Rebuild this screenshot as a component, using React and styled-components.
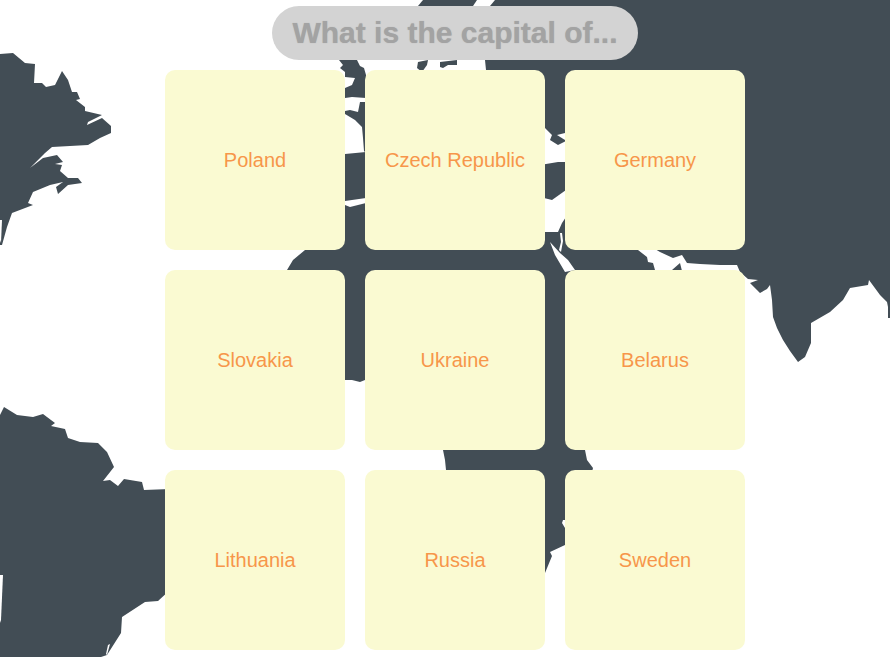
import styled, { createGlobalStyle } from "styled-components";

const GlobalStyle = createGlobalStyle`
  html, body {
    margin: 0;
    padding: 0;
    background: #fff;
    overflow: hidden;
  }
`;

const countries = [
  "Poland",
  "Czech Republic",
  "Germany",
  "Slovakia",
  "Ukraine",
  "Belarus",
  "Lithuania",
  "Russia",
  "Sweden",
];

// continents, in page pixels
const land = [
  // north america
  "0,54 13,53 25,63 35,64 34,83 42,83 46,87 55,85 62,71 68,80 72,92 77,92 80,99 76,100 85,107 85,111 102,115 88,122 87,125 102,118 111,126 111,133 100,138 88,145 52,147 45,153 30,168 43,158 57,155 63,162 55,164 62,165 60,171 68,178 78,178 82,183 68,185 58,194 56,187 63,182 50,185 33,192 28,203 33,205 12,213 7,227 2,245 0,245",
  // south america
  "0,415 4,407 17,415 33,417 43,414 55,423 51,426 65,429 68,438 80,442 98,443 107,452 114,467 103,481 110,480 118,486 124,479 142,482 144,490 170,489 170,590 158,601 145,602 122,617 121,633 107,655 101,657 0,657",
  // asia
  "495,0 890,0 890,318 888,318 888,307 887,302 880,295 869,280 868,285 850,288 843,300 830,312 811,323 811,343 808,350 805,357 798,362 790,351 783,340 777,328 773,317 772,300 770,285 767,289 760,293 750,283 758,280 748,279 740,272 737,265 720,265 700,264 687,263 682,255 673,258 660,252 655,249 600,150 566,141 558,145 550,140 552,135 545,128 500,100 486,70 485,60 490,6",
  // europe and africa
  "345,205 350,207 366,203 366,240 545,232 558,232 562,223 566,217 566,240 638,250 647,257 648,262 653,263 655,270 672,270 680,263 682,271 682,300 600,440 585,450 587,460 593,468 590,480 566,520 563,520 562,523 565,528 565,545 550,552 552,556 545,573 500,580 446,470 445,460 443,450 420,400 365,380 360,382 352,380 345,380 300,350 287,270 293,260 305,250",
  // islands around the title
  "418,6 423,0 477,0 473,6",
  "417,68 418,62 428,60 427,65 422,72",
  "440,62 457,60 457,65 448,65 443,68 440,67",
  "339,60 357,60 360,66 364,68 366,75 366,98 352,97 345,98 345,88 352,85 355,78 345,77 345,72 340,68 343,65",
  "345,111 350,110 358,112 360,102 366,102 366,153 364,151 363,138 362,127 355,120 345,114",
  "345,154 366,152 366,198 345,201",
  "540,165 558,162 566,162 566,190 552,200 540,197",
];

// gaps cut back into the land
const gaps = [
  "0,220 2,220 1,243 0,240",
  "0,575 3,575 1,620 0,623",
  "108,645 110,644 107,655 106,654",
  "565,133 557,135 565,140",
  "550,242 560,253 568,260 575,270 565,272 555,255",
  "560,233 562,233 563,241 561,252 559,250 561,242",
];

const MapLayer = styled.svg`
  position: absolute;
  top: 0;
  left: 0;
  width: 890px;
  height: 657px;
  z-index: 0;
`;

const Page = styled.div`
  position: relative;
  width: 890px;
  height: 657px;
  overflow: hidden;
  box-sizing: border-box;
  padding: 6px 0 0 20px;
  display: flex;
  flex-direction: column;
  align-items: center;
  font-family: "Liberation Sans", Arial, sans-serif;
`;

const Title = styled.div`
  position: relative;
  z-index: 1;
  height: 54px;
  line-height: 54px;
  padding: 0 20.5px;
  border-radius: 27px;
  background: #d3d3d3;
  color: #a3a3a3;
  font-size: 30px;
  font-weight: bold;
  white-space: nowrap;
  text-shadow: 0 0 1px #a9a9a9;
`;

const Grid = styled.div`
  position: relative;
  z-index: 1;
  margin-top: 10px;
  display: grid;
  grid-template-columns: repeat(3, 180px);
  grid-auto-rows: 180px;
  gap: 20px;
`;

const Card = styled.div`
  display: flex;
  align-items: center;
  justify-content: center;
  border-radius: 10px;
  background: #fafad2;
  color: #f7964a;
  font-size: 20px;
`;

export default function App() {
  return (
    <Page>
      <GlobalStyle />
      <MapLayer viewBox="0 0 890 657">
        {land.map((points) => (
          <polygon key={points} points={points} fill="#424d55" />
        ))}
        {gaps.map((points) => (
          <polygon key={points} points={points} fill="#fff" />
        ))}
      </MapLayer>
      <Title>What is the capital of...</Title>
      <Grid>
        {countries.map((name) => (
          <Card key={name}>{name}</Card>
        ))}
      </Grid>
    </Page>
  );
}
